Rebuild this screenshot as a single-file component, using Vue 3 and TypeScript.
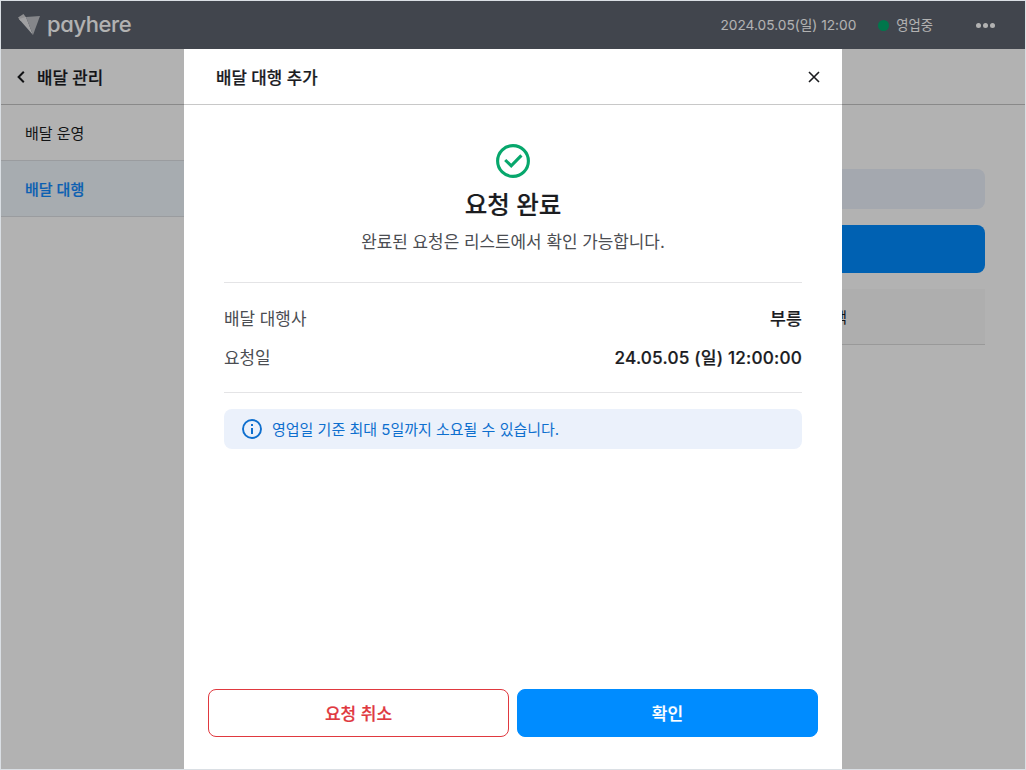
<template>
  <div class="app">
    <header class="topbar">
      <div class="brand">
        <svg class="brand-mark" width="23" height="22" viewBox="0 0 23 22">
          <path d="M0 3.5 L5.5 0 L8.5 4 L2.5 7 Z" fill="#cfcfd2" />
          <path d="M1 5 L8 3 L15 21 Z" fill="#e6e6e9" />
          <path d="M8 3 L22 2 L15 21 Z" fill="#bfc1c6" />
        </svg>
        <span class="brand-name">payhere</span>
      </div>
      <div class="status">
        <span class="status-time">{{ now }}</span>
        <span class="status-dot"></span>
        <span class="status-label">영업중</span>
        <span class="more"><i></i><i></i><i></i></span>
      </div>
    </header>

    <div class="body">
      <aside class="sidebar">
        <div class="sidebar-title">
          <svg width="8" height="12" viewBox="0 0 8 12">
            <path d="M6.8 0.8 L1.6 6 L6.8 11.2" fill="none" stroke="#1b1c1f" stroke-width="2" />
          </svg>
          <span class="strong">배달 관리</span>
        </div>
        <div
          v-for="menu in menus"
          :key="menu.id"
          class="menu-item"
          :class="{ active: menu.id === activeMenu }"
          @click="activeMenu = menu.id"
        >
          {{ menu.name }}
        </div>
      </aside>
      <main class="content">
        <div class="content-head"></div>
        <div class="content-body">
          <div class="content-notice"></div>
          <div class="content-button"></div>
          <div class="content-table-head"><span>금액</span></div>
        </div>
      </main>
    </div>

    <div class="overlay">
      <section class="modal">
        <div class="modal-header">
          <span class="strong">배달 대행 추가</span>
          <svg class="close" width="12" height="12" viewBox="0 0 12 12">
            <path d="M1 1 L11 11 M11 1 L1 11" fill="none" stroke="#1b1c1f" stroke-width="1.6" />
          </svg>
        </div>

        <div class="modal-body">
          <div class="result">
            <svg width="34" height="34" viewBox="0 0 34 34">
              <circle cx="17" cy="17" r="15.4" fill="none" stroke="#07a76c" stroke-width="3.1" />
              <path d="M9.2 16 L15.2 21.8 L25.4 11.4" fill="none" stroke="#07a76c" stroke-width="3.1" />
            </svg>
            <h2 class="result-title strong">요청 완료</h2>
            <p class="result-text">완료된 요청은 리스트에서 확인 가능합니다.</p>
          </div>

          <dl class="details">
            <div v-for="row in details" :key="row.label" class="details-row">
              <dt>{{ row.label }}</dt>
              <dd class="strong">{{ row.value }}</dd>
            </div>
          </dl>

          <div class="notice">
            <svg width="20" height="20" viewBox="0 0 20 20">
              <circle cx="10" cy="10" r="9" fill="none" stroke="#0e6fce" stroke-width="1.9" />
              <path d="M9 5 H11 V7 H9 Z M9 9 H11 V15 H9 Z" fill="#0e6fce" />
            </svg>
            <span>영업일 기준 최대 5일까지 소요될 수 있습니다.</span>
          </div>
        </div>

        <div class="modal-footer">
          <button class="btn btn-cancel strong">요청 취소</button>
          <button class="btn btn-confirm strong">확인</button>
        </div>
      </section>
    </div>
  </div>
</template>

<script setup lang="ts">
import { ref } from 'vue'

interface MenuItem {
  id: string
  name: string
}

interface DetailRow {
  label: string
  value: string
}

const now = ref('2024.05.05(일) 12:00')

const menus = ref<MenuItem[]>([
  { id: 'operation', name: '배달 운영' },
  { id: 'agency', name: '배달 대행' },
])

const activeMenu = ref('agency')

const details = ref<DetailRow[]>([
  { label: '배달 대행사', value: '부릉' },
  { label: '요청일', value: '24.05.05 (일) 12:00:00' },
])
</script>

<style>
body {
  margin: 0;
}
</style>

<style scoped>
.app {
  position: relative;
  box-sizing: border-box;
  width: 1026px;
  height: 770px;
  border: 1px solid #dadfe4;
  background: #ffffff;
  color: #1b1c1f;
  font-family: Inter, 'Noto Sans CJK KR', sans-serif;
  overflow: hidden;
}

/* semi-bold look, the CJK family jumps from medium to bold */
.strong {
  font-weight: 500;
  -webkit-text-stroke: 0.2px currentColor;
}

.topbar {
  display: flex;
  align-items: center;
  justify-content: space-between;
  height: 48px;
  padding: 0 30px 0 17px;
  box-sizing: border-box;
  background: #5d636f;
  color: #ffffff;
}

.brand {
  display: flex;
  align-items: center;
  gap: 6px;
}

.brand-name {
  font-size: 22px;
  line-height: 28px;
  font-weight: 500;
  letter-spacing: -0.4px;
  font-feature-settings: 'cv11';
  margin-top: -2px;
}

.status {
  display: flex;
  align-items: center;
  font-size: 13.7px;
  line-height: 20px;
}

.status-time,
.status-label {
  margin-top: -1px;
}

.status-dot {
  width: 11px;
  height: 11px;
  border-radius: 50%;
  margin: 0 7px 0 22px;
  background: #00aa6c;
}

.status-label {
  font-size: 13.3px;
}

.more {
  display: flex;
  gap: 2px;
  margin-left: 43px;
}

.more i {
  width: 5px;
  height: 5px;
  border-radius: 50%;
  background: #ffffff;
}

.body {
  display: flex;
  height: 720px;
}

.sidebar {
  width: 240px;
}

.sidebar-title {
  display: flex;
  align-items: center;
  gap: 12px;
  height: 56px;
  box-sizing: border-box;
  padding-left: 16px;
  border-bottom: 1px solid #c4c4c4;
  font-size: 16.8px;
  line-height: 24px;
}

.sidebar-title span,
.modal-header span {
  padding-top: 2px;
}

.menu-item {
  height: 56px;
  box-sizing: border-box;
  padding-left: 24px;
  border-bottom: 1px solid #dde0e4;
  font-size: 15px;
  line-height: 57px;
}

.menu-item.active {
  background: #f0f6fc;
  color: #108aff;
  font-weight: 500;
  -webkit-text-stroke: 0.2px currentColor;
}

.content {
  flex: 1;
}

.content-head {
  height: 55px;
  border-bottom: 1px solid #c4c4c4;
}

.content-body {
  padding: 64px 40px 0 40px;
}

.content-notice {
  height: 40px;
  border-radius: 8px;
  background: #ebf1fb;
}

.content-button {
  height: 48px;
  margin-top: 16px;
  border-radius: 8px;
  background: #008cff;
}

.content-table-head {
  display: flex;
  align-items: center;
  justify-content: flex-end;
  height: 55px;
  margin-top: 16px;
  padding-right: 138px;
  border-bottom: 1px solid #dcdcdc;
  background: #fafafa;
  font-size: 15px;
}

.overlay {
  position: absolute;
  inset: 0;
  display: flex;
  justify-content: center;
  padding-top: 48px;
  background: rgba(0, 0, 0, 0.3);
}

.modal {
  display: flex;
  flex-direction: column;
  width: 658px;
  background: #ffffff;
}

.modal-header {
  display: flex;
  align-items: center;
  justify-content: space-between;
  height: 56px;
  box-sizing: border-box;
  padding: 0 22px 0 32px;
  border-bottom: 1px solid #c8c8c8;
  font-size: 16.8px;
  line-height: 24px;
}

.modal-body {
  flex: 1;
  padding: 39px 40px 0;
}

.result {
  display: flex;
  flex-direction: column;
  align-items: center;
  height: 138px;
  border-bottom: 1px solid #e4e4e6;
}

.result-title {
  margin: 9px 0 0;
  font-size: 24.5px;
  line-height: 36px;
}

.result-text {
  margin: 7px 0 0;
  font-size: 16.9px;
  line-height: 24px;
  color: #4b4d52;
}

.details {
  height: 110px;
  margin: 0;
  padding-top: 1px;
  box-sizing: border-box;
  display: flex;
  flex-direction: column;
  justify-content: center;
  gap: 15px;
  border-bottom: 1px solid #e4e4e6;
}

.details-row {
  display: flex;
  justify-content: space-between;
  font-size: 16.9px;
  line-height: 24px;
}

.details-row dt {
  color: #4b4d52;
}

.details-row dd {
  margin: 0;
  font-size: 17.2px;
  letter-spacing: 0.18px;
}

.notice {
  display: flex;
  align-items: center;
  gap: 10px;
  height: 40px;
  margin-top: 16px;
  padding-left: 18px;
  border-radius: 8px;
  background: #ebf1fb;
  color: #0e6fce;
  font-size: 15px;
}

.notice span {
  margin-top: -2px;
}

.modal-footer {
  display: flex;
  gap: 8px;
  padding: 0 24px 32px;
}

.btn {
  flex: 1;
  height: 48px;
  padding: 0 0 2px;
  border: 1px solid #008cff;
  border-radius: 8px;
  font-family: inherit;
  font-size: 17px;
}

.btn-cancel {
  border-color: #e0393f;
  background: #ffffff;
  color: #e0393f;
}

.btn-confirm {
  background: #008cff;
  color: #ffffff;
}
</style>
